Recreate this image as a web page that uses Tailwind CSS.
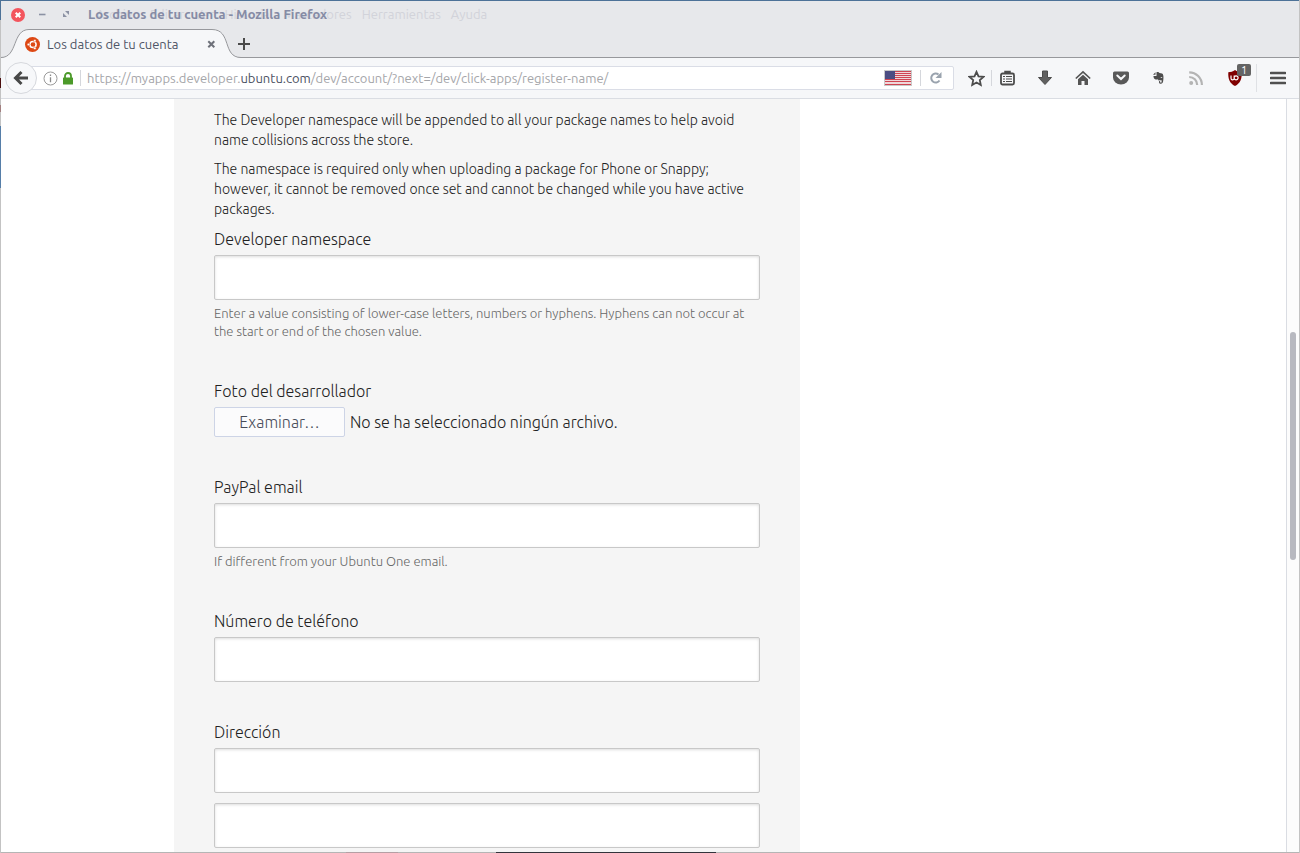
<!DOCTYPE html>
<html lang="es">
<head>
<meta charset="utf-8">
<meta name="viewport" content="width=device-width, initial-scale=1">
<title>Los datos de tu cuenta - Mozilla Firefox</title>
<script src="https://cdn.jsdelivr.net/npm/@tailwindcss/browser@4"></script>
</head>
<body class="h-screen overflow-hidden bg-[#c3c3c3] font-['Ubuntu','Lato',sans-serif] text-[#222222]">
<div class="flex h-full">
  <!-- desktop showing past the left window edge -->
  <div class="flex w-px shrink-0 flex-col" aria-hidden="true">
    <div class="h-5 bg-[#4d7298]"></div><div class="h-[58px]"></div><div class="h-[10px] bg-[#4a0d0d]"></div><div class="h-[17px]"></div><div class="h-[7px] bg-[#a27f7f]"></div><div class="h-[14px]"></div><div class="h-[62px] bg-[#567ea8]"></div>
  </div>
  <div class="flex min-w-0 flex-1 flex-col bg-white">
    <header class="shrink-0 border-t border-t-[#4d7298] bg-[#e7e8eb]">
      <!-- title bar -->
      <div class="relative flex h-7 items-center">
        <div class="flex w-[87px] items-center gap-[11px] pl-[10px]">
          <button type="button" aria-label="Cerrar ventana"><svg class="block" width="14" height="14" viewBox="0 0 14 14"><circle cx="7" cy="7" r="7" fill="#f3555d"/><path d="M4.700 4.700l4.600 4.600M9.300 4.700L4.700 9.300" stroke="#fff" stroke-width="2"/></svg></button>
          <button type="button" aria-label="Minimizar"><svg class="block" width="12" height="14" viewBox="0 0 12 14"><path d="M3 6.500h6.500" stroke="#8b91a3" stroke-width="1.600"/></svg></button>
          <button type="button" aria-label="Maximizar"><svg class="block" width="14" height="14" viewBox="0 0 14 14"><path d="M6 3h4v4zM4 5v4h4z" fill="#8b91a3"/></svg></button>
        </div>
        <nav class="flex gap-[10px] pl-2 text-[13px] text-[#d2d3da]" aria-label="Menú">
          <span>Archivo</span><span>Editar</span><span>Ver</span><span>Historial</span><span>Marcadores</span><span>Herramientas</span><span>Ayuda</span>
        </nav>
        <h1 class="absolute left-[87px] text-[13px] font-bold whitespace-nowrap text-[#858ba5]">Los datos de tu cuenta - Mozilla Firefox</h1>
      </div>
      <!-- tab strip -->
      <div class="flex h-[29px] border-b border-b-[#97989c]">
        <div class="relative h-[29px] w-[240px]">
          <svg class="absolute inset-0" width="240" height="29" viewBox="0 0 240 29" aria-hidden="true"><path d="M0 28.500C17 28.500 11 .5 28 .5H211C231 .5 221 28.500 240 28.500V29H0z" fill="#f6f7f9"/><path d="M0 28.500C17 28.500 11 .5 28 .5H211C231 .5 221 28.500 240 28.500" fill="none" stroke="#97989c"/></svg>
          <div class="relative flex h-full items-center pt-px pl-6">
            <svg width="15" height="15" viewBox="0 0 15 15" aria-hidden="true"><circle cx="7.500" cy="7.500" r="7.500" fill="#dd4814"/><circle cx="8" cy="7.500" r="3.100" fill="none" stroke="#fff" stroke-width="1.500"/><g fill="#fff" stroke="#dd4814" stroke-width=".5"><circle cx="3.500" cy="7.500" r="1.300"/><circle cx="9.800" cy="3.700" r="1.300"/><circle cx="9.800" cy="11.300" r="1.300"/></g></svg>
            <span class="flex-1 pt-px pl-[7px] text-[13px] whitespace-nowrap text-[#4f5566]">Los datos de tu cuenta</span>
            <button type="button" class="mr-[25px]" aria-label="Cerrar pestaña"><svg class="block" width="9" height="9" viewBox="0 0 9 9"><path d="M1.300 1.300l6 6M7.300 1.300l-6 6" stroke="#6e717a" stroke-width="2"/></svg></button>
          </div>
        </div>
        <button type="button" class="-ml-[3px] pt-px" aria-label="Nueva pestaña"><svg class="block" width="12" height="12" viewBox="0 0 12 12"><path d="M6 0v12M0 6h12" stroke="#4a4a4a" stroke-width="2"/></svg></button>
      </div>
      <!-- navigation toolbar -->
      <div class="flex h-[41px] items-center border-b border-b-[#dadde3] bg-[#f6f7f9] pl-1">
        <button type="button" class="z-10 -mr-4 grid size-8 shrink-0 place-items-center rounded-full border border-[#d6d8dd] bg-[#f7f8fa]" aria-label="Atrás"><svg width="16" height="16" viewBox="0 0 16 16"><path d="M15 8H3.500M8.500 2L2.500 8l6 6" fill="none" stroke="#484848" stroke-width="3"/></svg></button>
        <div class="flex h-6 min-w-0 flex-1 items-center rounded-xs border border-[#dadde6] bg-white pl-[21px]">
          <svg class="shrink-0" width="15" height="15" viewBox="0 0 15 15" aria-hidden="true"><circle cx="7.500" cy="7.500" r="6.500" fill="none" stroke="#9a9a9a"/><path d="M7.500 6.300v5M7.500 3.500v1.500" stroke="#8a8a8a" stroke-width="1.300"/></svg>
          <svg class="ml-1 shrink-0" width="12" height="13" viewBox="0 0 12 13" aria-hidden="true"><path d="M3 6V4a3 3 0 016 0v2" fill="none" stroke="#4c9a2a" stroke-width="1.800"/><rect x="1" y="5.500" width="10" height="7" rx=".6" fill="#4c9a2a"/></svg>
          <span class="mx-[6px] h-4 w-px shrink-0 bg-[#d5d7dc]"></span>
          <div role="textbox" aria-label="Dirección web" class="min-w-0 flex-1 truncate pt-px text-[13px] text-[#a5a6aa]">https://myapps.developer.<span class="text-[#4b5162]">ubuntu.com</span>/dev/account/?next=/dev/click-apps/register-name/</div>
          <svg class="shrink-0" width="28" height="16" viewBox="0 0 28 16" aria-label="Estados Unidos"><rect width="28" height="16" fill="#c9c9c9"/><rect x="1" y="1" width="26" height="14" fill="#efd6d9"/><path d="M1 1.500h26M1 3.500h26M1 5.500h26M1 7.500h26M1 9.500h26M1 11.500h26M1 14.500h26" stroke="#cf4452"/><rect x="1" y="1" width="10" height="8" fill="#4b4d83"/></svg>
          <span class="mx-2 h-4 w-px shrink-0 bg-[#d5d7dc]"></span>
          <button type="button" class="mr-[10px]" aria-label="Recargar"><svg class="block" width="14" height="14" viewBox="0 0 14 14"><path d="M10.500 9.500A4.500 4.500 0 1 1 9.500 3.500" fill="none" stroke="#9aa3ae" stroke-width="2"/><path d="M12.500 1v6h-6z" fill="#9aa3ae"/></svg></button>
        </div>
        <div class="flex h-full shrink-0 items-center pl-[14px]">
          <button type="button" aria-label="Marcador"><svg class="block" width="17" height="17" viewBox="0 0 17 17"><path d="M8.500 1.800l2 4.500 5 .5-3.700 3.300 1 4.900-4.300-2.500-4.300 2.500 1-4.900L1.500 6.800l5-.5z" fill="none" stroke="#4c4c4c" stroke-width="1.800"/></svg></button>
          <span class="ml-[6px] mr-[8px] h-4 w-px bg-[#d5d7dc]"></span>
          <button type="button" aria-label="Lista de marcadores"><svg class="block" width="15" height="16" viewBox="0 0 15 16"><path d="M5 3V1.500h5V3" fill="#4c4c4c" stroke="#4c4c4c" stroke-width="1.500"/><rect x="1" y="3.500" width="13" height="11" rx="1.500" fill="#f6f7f9" stroke="#4c4c4c" stroke-width="1.800"/><path d="M3 6.500h2M3 9h2M3 11.500h2M6 6.500h6M6 9h6M6 11.500h6" stroke="#4c4c4c" stroke-width="1.100"/></svg></button>
          <button type="button" class="ml-[22px]" aria-label="Descargas"><svg class="block" width="16" height="16" viewBox="0 0 16 16"><path d="M5.500 1h5v6.500h4L8 14.500 1.500 7.500h4z" fill="#606060" stroke="#4c4c4c"/></svg></button>
          <button type="button" class="ml-[22px]" aria-label="Inicio"><svg class="block" width="16" height="16" viewBox="0 0 16 16"><path d="M.8 8.500L8 1.800l7.200 6.700" fill="none" stroke="#555" stroke-width="1.700"/><path d="M3 9.200l5-4.500 5 4.500V15H9.500v-4h-3v4H3z" fill="#555"/></svg></button>
          <button type="button" class="ml-[22px]" aria-label="Pocket"><svg class="block" width="16" height="16" viewBox="0 0 16 16"><path d="M1.500 1.500h13a1.500 1.500 0 011.500 1.500v4.500a8 7 0 01-16 0V3a1.500 1.500 0 011.500-1.500z" fill="#595959"/><path d="M4.300 5.500L8 9l3.700-3.500" fill="none" stroke="#f6f7f9" stroke-width="2" stroke-linecap="round"/></svg></button>
          <button type="button" class="ml-[23px]" aria-label="Evernote"><svg class="block" width="13" height="14" viewBox="0 0 13 14"><path d="M4.500 1.300c1.300-.6 2.500 0 3 .8l2.600.4c1.400.5 1.500 3.500 1.300 5.500-.2 3.500-.8 4.800-2.900 4.800-1.700 0-2.200-2.800-.4-3v1.600h1.500V9.200H7.300C6.200 9.800 6.300 9 6 8.200 5 9 2.500 8.500 2 7.200 1.500 6.300 1.500 5.500 1.500 5h3z" fill="#4d4d4d"/><path d="M3.500 1.200v2.600H1z" fill="#4d4d4d"/><path d="M8.300 6.600c.6-1.200 2-.8 2.100.4z" fill="#fff"/></svg></button>
          <button type="button" class="ml-[23px]" aria-label="Canales web"><svg class="block" width="16" height="16" viewBox="0 0 16 16"><circle cx="3.200" cy="13" r="2" fill="#b4b4b4"/><path d="M1.200 7a8 8 0 018 8M1.200 2.300A12.700 12.700 0 0113.900 15" fill="none" stroke="#b4b4b4" stroke-width="2.200"/></svg></button>
          <button type="button" class="relative ml-[23px]" aria-label="uBlock Origin: 1 bloqueado"><svg class="block" width="16" height="16" viewBox="0 0 16 16"><path d="M8 0c2 1.700 4.500 2.200 6.700 2.200C15 9 13.500 13 8 16 2.500 13 1 9 1.300 2.200 3.500 2.200 6 1.700 8 0z" fill="#800000"/><path d="M4 5.500v2.700a1.600 1.600 0 003.200 0V5.500M7.200 8.500A2 2 0 1111 8.500a2 2 0 01-3.800 0" fill="none" stroke="#fff" stroke-width="1.200"/></svg><span class="absolute -top-[6px] left-[10px] grid h-3 w-[14px] place-items-center rounded-xs bg-[#646464] text-[11px] leading-3 text-white">1</span></button>
          <span class="ml-[13px] mr-[13px] h-7 w-px bg-[#dfe1e5]"></span>
          <button type="button" class="mr-[13px]" aria-label="Abrir menú"><svg class="block" width="16" height="14" viewBox="0 0 16 14"><path d="M1 2h14M1 7h14M1 12h14" stroke="#505050" stroke-width="2.600" stroke-linecap="round"/></svg></button>
        </div>
      </div>
    </header>
    <div class="flex min-h-0 flex-1">
      <main class="min-w-0 flex-1 overflow-hidden pl-[173px]">
        <form class="h-full w-[626px] max-w-full overflow-hidden bg-[#f5f5f5] px-10 pt-[11px] font-light">
          <div class="flex flex-col gap-[9px] text-sm leading-5">
            <p>The Developer namespace will be appended to all your package names to help avoid<br>name collisions across the store.</p>
            <p>The namespace is required only when uploading a package for Phone or Snappy;<br>however, it cannot be removed once set and cannot be changed while you have active<br>packages.</p>
          </div>
          <div class="mt-2 flex flex-col gap-[38px]">
            <div>
              <label for="ns" class="mb-1 block text-base">Developer namespace</label>
              <input id="ns" type="text" class="block h-[45px] w-full rounded-xs border border-[#c8c8c8] bg-white px-3 shadow-[inset_0_1px_3px_#dddddd]">
              <p class="mt-1 mb-px text-[13px] leading-[18px] text-[#666666]">Enter a value consisting of lower-case letters, numbers or hyphens. Hyphens can not occur at<br>the start or end of the chosen value.</p>
            </div>
            <div>
              <label for="photo" class="mb-1 block text-base">Foto del desarrollador</label>
              <div class="flex items-center gap-[5px] text-base">
                <button id="photo" type="button" class="h-[30px] w-[131px] rounded-xs border border-[#cdd4e6] bg-[#fbfbfc] text-[#464b58]">Examinar…</button>
                <span>No se ha seleccionado ningún archivo.</span>
              </div>
            </div>
            <div>
              <label for="paypal" class="mb-1 block text-base">PayPal email</label>
              <input id="paypal" type="email" class="block h-[45px] w-full rounded-xs border border-[#c8c8c8] bg-white px-3 shadow-[inset_0_1px_3px_#dddddd]">
              <p class="mt-1 mb-px text-[13px] leading-[18px] text-[#666666]">If different from your Ubuntu One email.</p>
            </div>
            <div>
              <label for="phone" class="mb-1 block text-base">Número de teléfono</label>
              <input id="phone" type="tel" class="block h-[45px] w-full rounded-xs border border-[#c8c8c8] bg-white px-3 shadow-[inset_0_1px_3px_#dddddd]">
            </div>
            <div>
              <label for="addr1" class="mb-1 block text-base">Dirección</label>
              <input id="addr1" type="text" class="mb-[10px] block h-[45px] w-full rounded-xs border border-[#c8c8c8] bg-white px-3 shadow-[inset_0_1px_3px_#dddddd]">
              <input id="addr2" aria-label="Dirección, línea 2" type="text" class="block h-[45px] w-full rounded-xs border border-[#c8c8c8] bg-white px-3 shadow-[inset_0_1px_3px_#dddddd]">
            </div>
          </div>
        </form>
      </main>
      <!-- scrollbar -->
      <div class="w-[13px] shrink-0 border-l border-l-[#dadde3] bg-[#fcfcfc] pt-[233px] pl-[3px]" aria-hidden="true">
        <div class="h-[228px] w-[6px] rounded-full bg-[#b8b9c0]"></div>
      </div>
    </div>
    <!-- desktop showing past the bottom window edge -->
    <div class="flex h-px shrink-0 bg-[#b5b5b5] pl-[345px]" aria-hidden="true">
      <div class="w-[52px] bg-[#b59fa4]"></div><div class="w-[98px]"></div><div class="w-[220px] bg-[#33343c]"></div>
    </div>
  </div>
  <div class="w-px shrink-0" aria-hidden="true"></div>
</div>
</body>
</html>
